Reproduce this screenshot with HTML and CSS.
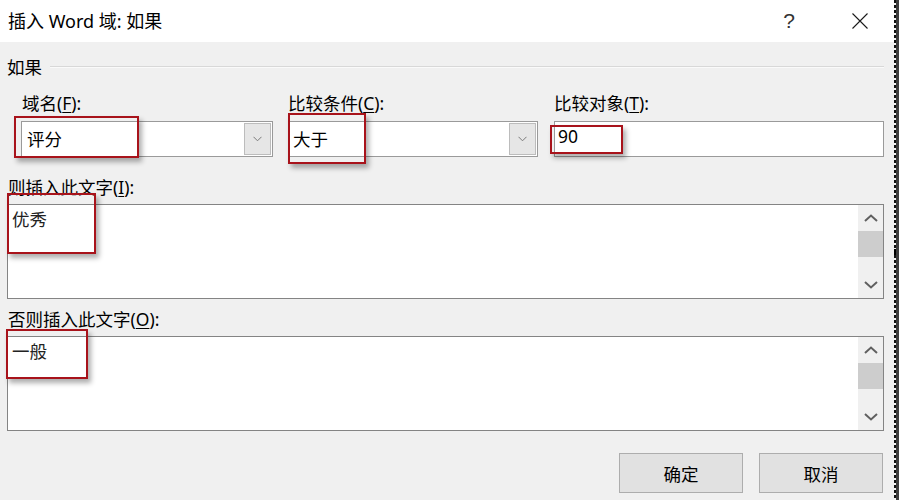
FILE: index.html
```html
<!DOCTYPE html>
<html lang="zh-CN">
<head>
<meta charset="utf-8">
<title>插入 Word 域: 如果</title>
<link rel="stylesheet" href="styles.css">
</head>
<body>
<div class="screen">
  <div class="dialog">
    <div class="titlebar">
      <span class="title">插入 Word 域: 如果</span>
      <span class="help">?</span>
      <span class="close"><svg width="16" height="16" viewBox="0 0 16 16"><path d="M0.5 0.5 L15.5 15.5 M15.5 0.5 L0.5 15.5" stroke="#1a1a1a" stroke-width="1.1" fill="none"/></svg></span>
    </div>
    <div class="content">
      <div class="group"><span class="group-name">如果</span><div class="rule"></div></div>
      <div class="fields">
        <div class="field f1">
          <div class="lbl">域名(<u>F</u>):</div>
          <div class="combo">
            <span class="val">评分</span>
            <span class="drop"><svg width="9" height="6" viewBox="0 0 9 6"><path d="M0.5 0.8 L4.5 4.8 L8.5 0.8" stroke="#7a7a7a" stroke-width="1" fill="none"/></svg></span>
            <span class="mark m1"></span>
          </div>
        </div>
        <div class="field f2">
          <div class="lbl">比较条件(<u>C</u>):</div>
          <div class="combo">
            <span class="val">大于</span>
            <span class="drop"><svg width="9" height="6" viewBox="0 0 9 6"><path d="M0.5 0.8 L4.5 4.8 L8.5 0.8" stroke="#7a7a7a" stroke-width="1" fill="none"/></svg></span>
            <span class="mark m2"></span>
          </div>
        </div>
        <div class="field f3">
          <div class="lbl">比较对象(<u>T</u>):</div>
          <div class="input">
            <span class="val num">90</span>
            <span class="mark m3"></span>
          </div>
        </div>
      </div>

      <div class="lbl row-lbl first">则插入此文字(<u>I</u>):</div>
      <div class="textbox">
        <span class="val">优秀</span>
        <div class="scroll">
          <div class="sbtn"><svg width="14" height="8" viewBox="0 0 14 8"><path d="M1 7 L7 1.5 L13 7" stroke="#606060" stroke-width="2" fill="none"/></svg></div>
          <div class="thumb"></div>
          <div class="track"></div>
          <div class="sbtn"><svg width="14" height="8" viewBox="0 0 14 8"><path d="M1 1 L7 6.5 L13 1" stroke="#606060" stroke-width="2" fill="none"/></svg></div>
        </div>
        <span class="mark m4"></span>
      </div>

      <div class="lbl row-lbl second">否则插入此文字(<u>O</u>):</div>
      <div class="textbox">
        <span class="val">一般</span>
        <div class="scroll">
          <div class="sbtn"><svg width="14" height="8" viewBox="0 0 14 8"><path d="M1 7 L7 1.5 L13 7" stroke="#606060" stroke-width="2" fill="none"/></svg></div>
          <div class="thumb"></div>
          <div class="track"></div>
          <div class="sbtn"><svg width="14" height="8" viewBox="0 0 14 8"><path d="M1 1 L7 6.5 L13 1" stroke="#606060" stroke-width="2" fill="none"/></svg></div>
        </div>
        <span class="mark m5"></span>
      </div>

      <div class="buttons">
        <button class="btn">确定</button>
        <button class="btn">取消</button>
      </div>
    </div>
  </div>
  <div class="edge"><div class="dash"><div class="knob"></div></div><div class="dark"></div></div>
</div>
</body>
</html>
```

FILE: styles.css
```css
* { box-sizing: border-box; }
html, body { margin: 0; padding: 0; }
body {
  font-family: "Noto Sans", "Noto Sans CJK SC", sans-serif;
  font-size: 17.5px;
  color: #000;
  background: #3d3d3d;
  width: 899px;
  height: 500px;
  overflow: hidden;
}
.screen { display: flex; height: 500px; }
.dialog { width: 894px; display: flex; flex-direction: column; background: #f0f0f0; }

.titlebar {
  height: 42px;
  background: #fff;
  display: flex;
  align-items: center;
  flex-shrink: 0;
}
.title { padding-left: 8px; font-size: 18px; line-height: 20px; }
.help {
  margin-left: auto;
  width: 28px;
  text-align: center;
  font-family: "Liberation Sans", sans-serif;
  font-size: 21px;
  font-weight: 400;
  color: #333;
  line-height: 22px;
}
.close {
  width: 43px;
  margin-left: 35px;
  margin-right: 13px;
  display: flex;
  justify-content: center;
  align-items: center;
}

.content {
  flex: 1;
  padding: 15px 10px 0 7px;
  display: flex;
  flex-direction: column;
}
.group { display: flex; align-items: center; height: 20px; }
.group-name { line-height: 20px; }
.rule { flex: 1; margin-left: 8px; border-top: 1px solid #d8d8d8; border-bottom: 1px solid #fafafa; }

.lbl { line-height: 20px; height: 20px; white-space: nowrap; }
.lbl u { text-underline-offset: 2px; text-decoration-thickness: 1px; }

.fields { display: flex; margin-top: 16px; padding-left: 14px; gap: 15px; }
.f1 { width: 252px; }
.f1 .lbl { padding-left: 1px; }
.f2 { width: 250px; margin-right: 1px; }
.f3 { width: 330px; }

.combo, .input {
  position: relative;
  margin-top: 8px;
  height: 36px;
  background: #fff;
  border: 1px solid #9a9a9a;
  display: flex;
}
.combo .val { flex: 1; padding-left: 5px; line-height: 34px; }
.f2 .combo .val { padding-left: 4px; }
.input .val { flex: 1; padding-left: 3px; line-height: 28px; }
.drop {
  width: 27px;
  margin: 1px;
  background: #e6e6e6;
  border: 1px solid #bcbcbc;
  display: flex;
  align-items: center;
  justify-content: center;
}

.row-lbl.first { margin-top: 20px; padding-left: 1px; }
.row-lbl.second { margin-top: 10px; padding-left: 1px; }

.textbox {
  position: relative;
  margin-top: 7px;
  height: 95px;
  background: #fff;
  border: 1px solid #848484;
  display: flex;
}
.textbox .val { flex: 1; padding: 3px 0 0 4px; line-height: 22px; color: #222; }
.scroll { width: 25px; background: #f0f0f0; display: flex; flex-direction: column; }
.sbtn { height: 26px; display: flex; align-items: center; justify-content: center; }
.thumb { height: 26px; background: #cdcdcd; }
.track { flex: 1; }

.buttons { display: flex; justify-content: flex-end; gap: 16px; margin-top: 22px; margin-right: 1px; }
.btn {
  width: 124px;
  height: 40px;
  background: #e1e1e1;
  border: 1px solid #adadad;
  font-family: "Noto Sans", "Noto Sans CJK SC", sans-serif;
  font-size: 17.5px;
  color: #000;
  padding: 0;
}

.mark {
  position: absolute;
  border: 2px solid #a8131b;
  box-shadow: 3px 4px 5px rgba(0, 0, 0, 0.32);
  pointer-events: none;
}
.m1 { left: -8px; top: -6px; width: 125px; height: 42px; }
.m2 { left: -1px; top: -9px; width: 78px; height: 51px; }
.m3 { left: -5px; top: 3px; width: 73px; height: 29px; }
.m4 { left: -1px; top: -12px; width: 89px; height: 61px; }
.m5 { left: -2px; top: -8px; width: 82px; height: 50px; }

.edge { width: 5px; display: flex; }
.dash {
  width: 2px;
  background: repeating-linear-gradient(to bottom, #111 0 3px, #f4f4f4 3px 5px);
}
.knob { margin-top: 249px; height: 6px; width: 3px; background: #000; }
.dark { flex: 1; background: #3d3d3d; }
```
